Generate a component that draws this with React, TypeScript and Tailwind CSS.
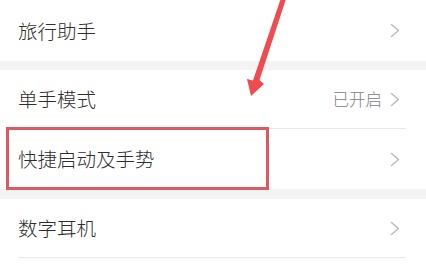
import React from 'react';

const font = { fontFamily: '"Noto Sans CJK SC", "Noto Sans", sans-serif' };

function Chevron() {
  return (
    <svg width="10" height="15" viewBox="0 0 10 15" fill="none" className="shrink-0">
      <path d="M1.5 1.5 L8.5 7.5 L1.5 13.5" stroke="#bcbcbc" strokeWidth="1.5" strokeLinecap="round" strokeLinejoin="round" />
    </svg>
  );
}

function Row({ label, value, height, divider }: { label: string; value?: string; height: string; divider?: boolean }) {
  return (
    <div className="relative bg-white">
      <div className={`flex items-center pl-[18px] pr-[26px] ${height}`}>
        <span className="flex-1 text-[19.5px] font-light text-[#2e2e2e] leading-none">{label}</span>
        {value && <span className="text-[16.5px] font-light text-[#808080] leading-none mr-[8px]">{value}</span>}
        <Chevron />
      </div>
      {divider && <div className="ml-[18px] mr-[20px] h-px bg-[#e9e9e9]" />}
    </div>
  );
}

export default function App() {
  return (
    <div className="relative w-[426px] h-[264px] overflow-hidden bg-white" style={font}>
      <Row label="旅行助手" height="h-[61px]" />
      <div className="h-[9px] bg-[#f4f4f4]" />
      <Row label="单手模式" value="已开启" height="h-[58px]" divider />
      <Row label="快捷启动及手势" height="h-[60px]" />
      <div className="h-[10px] bg-[#f4f4f4]" />
      <Row label="数字耳机" height="h-[58px]" divider />

      {/* annotation box */}
      <div className="absolute left-[6px] top-[127px] w-[263px] h-[63px] border-[3px] border-[#dc5a60]" />

      {/* annotation arrow */}
      <svg className="absolute left-0 top-0" width="426" height="264" viewBox="0 0 426 264">
        <path d="M281 -2 L286 -1 L259.5 80 L264 84 L251 96 L247 79 L253 80.5 Z" fill="#f04b4f" />
      </svg>
    </div>
  );
}
